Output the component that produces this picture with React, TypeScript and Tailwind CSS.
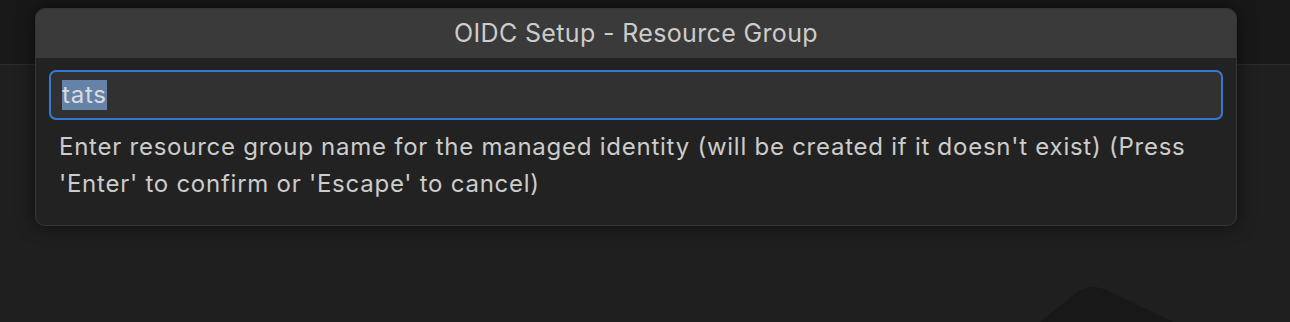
import React from "react";

export default function App() {
  const font = { fontFamily: "Inter, 'Noto Sans', sans-serif" };
  return (
    <div className="relative h-[322px] w-[1290px] overflow-hidden bg-[#1f1f1f]" style={font}>
      <div className="h-[65px] border-b border-[#2b2b2b] bg-[#181818]" />
      <svg
        className="absolute left-[1030px] top-[280px]"
        width="160"
        height="42"
        viewBox="0 0 160 42"
      >
        <path d="M10 42 L46 13 Q60 3 76 10 L143 42 Z" fill="#181818" />
      </svg>
      <div className="absolute left-[35px] top-[8px] w-[1202px] overflow-hidden rounded-[10px] border border-[#363636] bg-[#222222] shadow-[0_0_18px_rgba(0,0,0,0.55)]">
        <div className="flex h-[49px] items-center justify-center bg-[#3a3a3a] pt-[1px] text-[25px] tracking-[0.35px] text-[#cccccc]">
          OIDC Setup - Resource Group
        </div>
        <div className="px-[13px] pb-[23px] pt-[12px]">
          <div className="flex h-[50px] items-center rounded-[7px] border-2 border-[#3579d3] bg-[#313131] pl-[11px]">
            <span className="bg-[#6582a8] text-[24px] leading-[30px] tracking-[0.75px] text-[#dcdcdc]">tats</span>
          </div>
          <p className="ml-[10px] mr-[20px] mt-[8px] text-[24px] leading-[37px] tracking-[0.75px] text-[#cccccc]">
            Enter resource group name for the managed identity (will be created if it doesn't exist) (Press 'Enter' to confirm or 'Escape' to cancel)
          </p>
        </div>
      </div>
    </div>
  );
}
